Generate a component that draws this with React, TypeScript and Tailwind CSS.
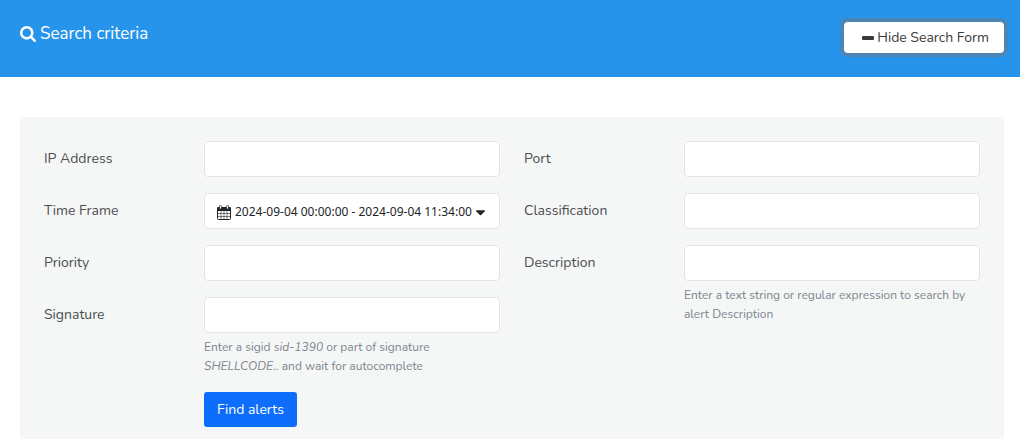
import type { ReactNode } from "react";

type IconProps = { path: string; className?: string; viewBox?: string };

const SEARCH =
  "M1216 832q0-185-131.5-316.5t-316.5-131.5-316.5 131.5-131.5 316.5 131.5 316.5 316.5 131.5 316.5-131.5 131.5-316.5zm512 832q0 52-38 90t-90 38q-54 0-90-38l-343-342q-179 124-399 124-143 0-273.5-55.5t-225-150-150-225-55.5-273.5 55.5-273.5 150-225 225-150 273.5-55.5 273.5 55.5 225 150 150 225 55.5 273.5q0 220-124 399l343 343q37 37 37 90z";
const MINUS = "M1 5h10q1 0 1 1v2q0 1-1 1h-10q-1 0-1-1v-2q0-1 1-1z";
const CARET =
  "M1408 704q0 26-19 45l-448 448q-19 19-45 19t-45-19l-448-448q-19-19-19-45t19-45 45-19h896q26 0 45 19t19 45z";

function Icon({ path, className, viewBox = "0 0 1792 1792" }: IconProps) {
  return (
    <svg viewBox={viewBox} fill="currentColor" aria-hidden="true" className={className}>
      <path d={path} />
    </svg>
  );
}

function CalendarIcon({ className }: { className?: string }) {
  return (
    <svg viewBox="0 0 14 15" fill="none" stroke="currentColor" aria-hidden="true" className={className}>
      <path d="M1 2h12q1 0 1 1v3H0V3q0-1 1-1z" fill="currentColor" stroke="none" />
      <path d="M.5 5v8.5q0 1 1 1h11q1 0 1-1V5" />
      <path d="M4 6v8M7 6v8M10 6v8M1 8.5h12M1 11.5h12" strokeOpacity=".65" strokeWidth=".9" />
      <rect x="2.5" y=".5" width="2" height="3.5" rx=".8" fill="white" strokeWidth=".8" />
      <rect x="9.5" y=".5" width="2" height="3.5" rx=".8" fill="white" strokeWidth=".8" />
    </svg>
  );
}

type FieldProps = { id: string; label: string; help?: ReactNode; children?: ReactNode };

function Field({ id, label, help, children }: FieldProps) {
  return (
    <div className="flex items-start">
      <label htmlFor={id} className="w-40 shrink-0 py-2 text-sm leading-5 text-[#4b4d50]">
        {label}
      </label>
      <div className="min-w-0 flex-1">
        {children ?? (
          <input
            id={id}
            type="text"
            className="block h-9 w-full rounded border border-[#e6e4e1] bg-white px-3 text-sm"
          />
        )}
        {help && <p className="mt-[5px] text-xs leading-[19px] text-[#7c858d]">{help}</p>}
      </div>
    </div>
  );
}

export default function App() {
  return (
    <div className="flex min-h-screen flex-col bg-white font-['Nunito','Noto_Sans',sans-serif]">
      <header className="flex items-start justify-between bg-[#2794eb] pt-[22px] pr-4 pb-6 pl-5">
        <h1 className="flex items-center gap-1 text-[17px] leading-6 text-white">
          <Icon path={SEARCH} viewBox="64 128 1664 1664" className="size-4" />
          Search criteria
        </h1>
        <button
          type="button"
          className="flex h-[31px] items-center gap-[3px] rounded-sm bg-white pr-[15px] pl-[18px] text-sm text-[#3a3a3a] ring-4 ring-[#4c84b4]"
        >
          <Icon path={MINUS} viewBox="0 0 12 14" className="h-3.5 w-3" />
          Hide Search Form
        </button>
      </header>
      <main className="flex flex-1 flex-col pt-10 pr-4 pl-5">
        <form className="grid flex-1 grid-cols-2 content-start gap-x-6 rounded-t bg-[#f5f7f7] px-6 pt-6 pb-3">
          <div className="flex flex-col gap-4">
            <Field id="ip" label="IP Address" />
            <Field id="time" label="Time Frame">
              <button
                id="time"
                type="button"
                className="flex h-9 w-full items-center gap-1 rounded border border-[#e6e4e1] bg-white px-3 pt-0.5 font-['Noto_Sans',sans-serif] text-xs text-[#212529]"
              >
                <CalendarIcon className="h-[15px] w-3.5 shrink-0" />
                <span className="whitespace-nowrap">2024-09-04 00:00:00 - 2024-09-04 11:34:00</span>
                <Icon path={CARET} viewBox="384 384 1024 1024" className="size-[9px] shrink-0" />
              </button>
            </Field>
            <Field id="priority" label="Priority" />
            <Field
              id="signature"
              label="Signature"
              help={
                <>
                  Enter a sigid <em>sid-1390</em> or part of signature
                  <br />
                  <em>SHELLCODE..</em> and wait for autocomplete
                </>
              }
            />
            <div className="pl-40">
              <button
                type="submit"
                className="h-[35px] rounded-[3px] bg-[#0d6efd] px-[13px] text-sm text-white"
              >
                Find alerts
              </button>
            </div>
          </div>
          <div className="flex flex-col gap-4">
            <Field id="port" label="Port" />
            <Field id="classification" label="Classification" />
            <Field
              id="description"
              label="Description"
              help="Enter a text string or regular expression to search by alert Description"
            />
          </div>
        </form>
      </main>
    </div>
  );
}
